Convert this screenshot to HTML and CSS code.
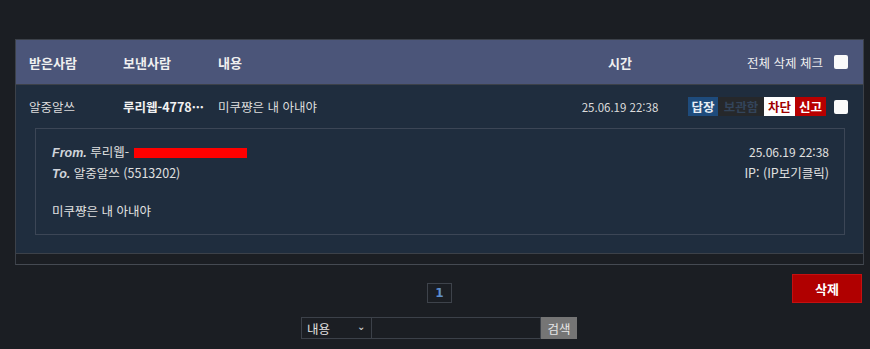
FILE: index.html
```html
<!DOCTYPE html>
<html lang="ko">
<head>
<meta charset="utf-8">
<link rel="stylesheet" href="styles.css">
</head>
<body>
<div class="box">
  <div class="thead">
    <div class="c1">받은사람</div>
    <div class="c2">보낸사람</div>
    <div class="c3">내용</div>
    <div class="c4">시간</div>
    <div class="c5">전체 삭제 체크 <span class="chk"></span></div>
  </div>
  <div class="row">
    <div class="c1">알중알쓰</div>
    <div class="c2 bold">루리웹-4778···</div>
    <div class="c3">미쿠쨩은 내 아내야</div>
    <div class="c4 time">25.06.19 22:38</div>
    <div class="c5">
      <span class="btns">
        <span class="b reply">답장</span><span class="b keep">보관함</span><span class="b block">차단</span><span class="b report">신고</span>
      </span>
      <span class="chk"></span>
    </div>
  </div>
  <div class="detailwrap">
    <div class="detail">
      <div class="meta">
        <div><i class="lbl">From.</i> 루리웹-<span class="redact"></span></div>
        <div class="num">25.06.19 22:38</div>
      </div>
      <div class="meta">
        <div><i class="lbl">To.</i> 알중알쓰 (5513202)</div>
        <div>IP: (IP보기클릭)</div>
      </div>
      <div class="msg">미쿠쨩은 내 아내야</div>
    </div>
  </div>
  <div class="band"></div>
</div>
<div class="actions">
  <span class="del">삭제</span>
</div>
<div class="pager"><span class="page">1</span></div>
<div class="search">
  <span class="sel">내용<span class="arrow">⌄</span></span><span class="inp"></span><span class="sbtn">검색</span>
</div>
</body>
</html>
```
FILE: styles.css
```css
* { box-sizing: border-box; }
body {
  margin: 0;
  background: #1b1e23;
  font-family: "Noto Sans CJK KR", "Noto Sans", sans-serif;
  font-size: 12.5px;
  color: #dcdcdc;
  width: 870px;
  height: 349px;
  overflow: hidden;
}
.box {
  margin: 39px 6px 0 15px;
  border: 1px solid #3c4149;
  border-bottom-color: #454a52;
  background: #1f2d3e;
}
.thead, .row {
  display: grid;
  grid-template-columns: 94px 95px 342px 120px 168px;
  padding: 0 15px 0 13px;
  align-items: center;
}
.thead {
  height: 45px;
  background: #4b5579;
  border-bottom: 1px solid #3c4149;
  font-weight: bold;
  font-size: 13px;
  color: #f0f0f0;
}
.thead .c5 {
  font-weight: normal;
  font-size: 12.5px;
  display: flex;
  justify-content: flex-end;
  align-items: center;
  gap: 11px;
}
.c4 { text-align: center; }
.row {
  height: 43px;
  padding-top: 0;
}
.bold { font-weight: bold; color: #f2f2f2; }
.time { font-size: 11.5px; }
.row .c5 {
  display: flex;
  justify-content: flex-end;
  align-items: center;
  gap: 8px;
}
.btns { display: flex; }
.b {
  display: inline-block;
  height: 19px;
  line-height: 19px;
  padding: 0 2px;
  font-weight: bold;
  font-size: 12.5px;
}
.reply { background: #1e4b7c; color: #e8eef5; width: 30px; text-align: center; }
.keep { background: #26282b; color: #33445a; width: 46px; text-align: center; }
.block { background: #ffffff; color: #a00000; width: 31px; text-align: center; }
.report { background: #b80000; color: #ffffff; width: 31px; text-align: center; }
.chk {
  display: inline-block;
  width: 14px;
  height: 14px;
  background: #fafafa;
  border-radius: 2px;
}
.detailwrap {
  padding: 0 18px 18px 19px;
}
.detail {
  border: 1px solid #3c4656;
  height: 107px;
  padding: 13px 15px 0 16px;
  line-height: 19px;
  color: #e0e0e0;
}
.meta {
  display: flex;
  justify-content: space-between;
}
.num { font-size: 12px; }
.lbl {
  font-weight: bold;
  font-style: italic;
  color: #d0d4da;
  font-family: "Liberation Sans", "Noto Sans CJK KR", sans-serif;
  font-size: 12.5px;
}
.redact {
  display: inline-block;
  width: 113px;
  height: 10px;
  margin-left: 5px;
  background: #ff0000;
  vertical-align: -1px;
}
.msg { margin-top: 17px; }
.band {
  height: 11px;
  background: #1b1e23;
  border-top: 1px solid #3c4149;
}
.actions {
  display: flex;
  justify-content: flex-end;
  padding: 9px 8px 0 0;
}
.del {
  display: inline-block;
  width: 70px;
  height: 29px;
  line-height: 28px;
  text-align: center;
  background: #b00000;
  border: 1px solid #c41010;
  color: #fff;
  font-weight: bold;
  font-size: 13px;
}
.pager {
  display: flex;
  justify-content: center;
  margin-top: -20px;
  padding-left: 9px;
}
.page {
  display: inline-block;
  width: 25px;
  height: 20px;
  line-height: 18px;
  text-align: center;
  border: 1px solid #3e434b;
  color: #5d8fcc;
  font-weight: bold;
  font-family: "DejaVu Sans", sans-serif;
  font-size: 12px;
}
.search {
  display: flex;
  justify-content: center;
  margin-top: 14px;
  padding-left: 8px;
}
.sel, .inp, .sbtn {
  height: 22px;
  display: inline-flex;
  align-items: center;
}
.sel {
  width: 71px;
  border: 1px solid #3c4149;
  padding: 0 6px 0 5px;
  justify-content: space-between;
  color: #e0e0e0;
}
.arrow { font-size: 10px; line-height: 10px; margin-top: -4px; }
.inp {
  width: 169px;
  border: 1px solid #3c4149;
  border-left: none;
}
.sbtn {
  width: 36px;
  background: #757575;
  color: #e6e6e6;
  justify-content: center;
}
```
